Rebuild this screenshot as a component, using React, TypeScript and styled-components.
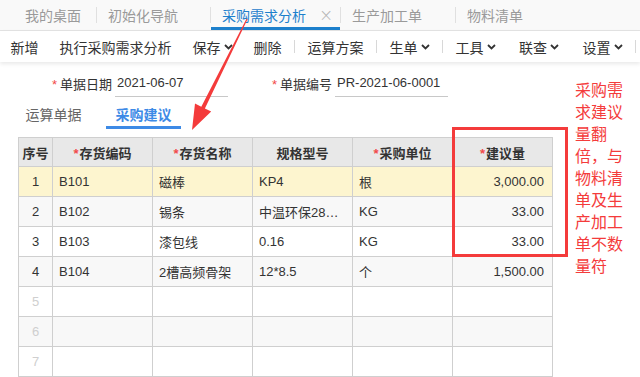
import styled, { createGlobalStyle } from "styled-components";

const GlobalStyle = createGlobalStyle`
  html, body {
    margin: 0;
    padding: 0;
    background: #fff;
  }
  body {
    font-family: "Liberation Sans", "Noto Sans CJK SC", sans-serif;
    color: #333;
  }
`;

const Page = styled.div`
  position: relative;
  width: 640px;
  height: 377px;
  overflow: hidden;
  background: #fff;
`;

const TabBar = styled.div`
  display: flex;
  align-items: stretch;
  height: 30px;
  background: #f9f9f9;
  border-bottom: 1px solid #e3e3e3;
  font-size: 14px;
`;

const Tab = styled.div<{ $width: number; $active?: boolean; $first?: boolean }>`
  display: flex;
  align-items: center;
  box-sizing: border-box;
  width: ${(p) => p.$width}px;
  padding-left: ${(p) => (p.$first ? 25 : 11)}px;
  color: ${(p) => (p.$active ? "#1d80cc" : "#9a9a9a")};
  border-bottom: 3px solid ${(p) => (p.$active ? "#1d80cc" : "transparent")};
  padding-top: 3px;
  white-space: nowrap;
`;

const TabClose = styled.span`
  margin-left: 13px;
  color: #b5b5b5;
  font-size: 17px;
  font-family: "DejaVu Sans", sans-serif;
  font-weight: 300;
`;

const TabDivider = styled.div`
  width: 1px;
  height: 16px;
  align-self: center;
  background: #e0e0e0;
`;

const Toolbar = styled.div`
  display: flex;
  align-items: center;
  height: 31px;
  font-size: 14px;
  color: #333;
  background: #fff;
  box-shadow: 0 2px 4px rgba(0, 0, 0, 0.09);
  position: relative;
`;

const ToolItem = styled.div<{ $wide?: boolean }>`
  display: flex;
  align-items: center;
  padding: 0 10.5px 0 ${(p) => (p.$wide ? 13 : 10.5)}px;
  white-space: nowrap;
`;

const ToolDivider = styled.div`
  width: 1px;
  height: 13px;
  margin: 0 2px;
  background: #d8d8d8;
`;

const Chevron = () => (
  <svg width="9" height="6" viewBox="0 0 9 6" style={{ marginLeft: 3 }}>
    <path d="M1 1 L4.5 4.5 L8 1" fill="none" stroke="#333" strokeWidth="1.8" />
  </svg>
);

const Content = styled.div`
  padding-top: 8px;
`;

const FormRow = styled.div`
  display: flex;
  gap: 12px;
  padding-left: 20px;
  height: 27px;
  font-size: 13px;
`;

const Field = styled.div`
  display: flex;
  align-items: center;
`;

const Label = styled.div`
  width: 92px;
  text-align: right;
  margin-right: 3px;
  color: #333;
`;

const Star = styled.span`
  color: #f24a4a;
  margin-right: 3px;
`;

const InputBox = styled.div`
  width: 113px;
  box-sizing: border-box;
  height: 27px;
  line-height: 26px;
  padding-left: 2px;
  border-bottom: 1px solid #c8c8c8;
  color: #333;
`;

const SubTabs = styled.div`
  display: flex;
  gap: 15px;
  padding-left: 16px;
  margin-top: 5px;
  font-size: 14px;
`;

const SubTab = styled.div<{ $active?: boolean }>`
  width: 75px;
  height: 27px;
  box-sizing: border-box;
  display: flex;
  align-items: center;
  justify-content: center;
  color: ${(p) => (p.$active ? "#3d8ae6" : "#666")};
  font-weight: ${(p) => (p.$active ? 600 : 400)};
  border-bottom: 3px solid ${(p) => (p.$active ? "#3d8ae6" : "transparent")};
`;

const TableWrap = styled.div`
  margin: 8px 0 0 18px;
`;

const Grid = styled.table`
  width: 535px;
  border-collapse: collapse;
  table-layout: fixed;
  font-size: 13px;
  color: #333;
`;

const Th = styled.th`
  height: 28px;
  border: 1px solid #cfcfcf;
  background: #e8e8e8;
  font-weight: 700;
  text-align: center;
  padding: 0;
  white-space: nowrap;
`;

const Row = styled.tr<{ $bg: string }>`
  background: ${(p) => p.$bg};
`;

const paddingFor = (align?: string) => {
  if (align === "center") return "0";
  if (align === "right") return "0 8px 0 6px";
  return "0 12px 0 6px";
};

const Td = styled.td<{ $align?: "left" | "center" | "right"; $muted?: boolean }>`
  height: 29px;
  border: 1px solid #cfcfcf;
  padding: ${(p) => paddingFor(p.$align)};
  text-align: ${(p) => p.$align || "left"};
  color: ${(p) => (p.$muted ? "#cfcfcf" : "#333")};
  white-space: nowrap;
  overflow: hidden;
  text-overflow: ellipsis;
`;

const HighlightBox = styled.div`
  position: absolute;
  left: 452px;
  top: 127px;
  width: 116px;
  height: 130px;
  box-sizing: border-box;
  border: 3px solid #f43b3b;
  pointer-events: none;
`;

const Note = styled.div`
  position: absolute;
  left: 575px;
  top: 78px;
  width: 49px;
  font-family: "Noto Sans CJK SC", sans-serif;
  font-size: 16px;
  line-height: 22px;
  color: #f43b3b;
`;

const ArrowLayer = styled.svg`
  position: absolute;
  left: 0;
  top: 0;
  pointer-events: none;
`;

const columns = [
  { title: "序号", width: 34, required: false },
  { title: "存货编码", width: 100, required: true },
  { title: "存货名称", width: 100, required: true },
  { title: "规格型号", width: 100, required: false },
  { title: "采购单位", width: 100, required: true },
  { title: "建议量", width: 100, required: true },
];

const rows = [
  { code: "B101", name: "磁棒", spec: "KP4", unit: "根", qty: "3,000.00" },
  { code: "B102", name: "锡条", spec: "中温环保2830无铅锡条", unit: "KG", qty: "33.00" },
  { code: "B103", name: "漆包线", spec: "0.16", unit: "KG", qty: "33.00" },
  { code: "B104", name: "2槽高频骨架", spec: "12*8.5", unit: "个", qty: "1,500.00" },
  null,
  null,
  null,
  null,
];

const rowBg = (i: number) => {
  if (i === 0) return "#fdf5cf";
  return i % 2 === 1 ? "#f8f8f8" : "#fff";
};

export default function App() {
  return (
    <Page>
      <GlobalStyle />
      <TabBar>
        <Tab $width={96} $first>我的桌面</Tab>
        <TabDivider />
        <Tab $width={113}>初始化导航</Tab>
        <TabDivider />
        <Tab $width={129} $active>
          采购需求分析<TabClose>×</TabClose>
        </Tab>
        <TabDivider />
        <Tab $width={114}>生产加工单</Tab>
        <TabDivider />
        <Tab $width={100}>物料清单</Tab>
      </TabBar>

      <Toolbar>
        <ToolItem>新增</ToolItem>
        <ToolItem>执行采购需求分析</ToolItem>
        <ToolItem>
          保存<Chevron />
        </ToolItem>
        <ToolItem>删除</ToolItem>
        <ToolDivider />
        <ToolItem>运算方案</ToolItem>
        <ToolDivider />
        <ToolItem>
          生单<Chevron />
        </ToolItem>
        <ToolDivider />
        <ToolItem>
          工具<Chevron />
        </ToolItem>
        <ToolItem $wide>
          联查<Chevron />
        </ToolItem>
        <ToolItem $wide>
          设置<Chevron />
        </ToolItem>
        <ToolDivider />
      </Toolbar>

      <Content>
        <FormRow>
          <Field>
            <Label>
              <Star>*</Star>单据日期
            </Label>
            <InputBox>2021-06-07</InputBox>
          </Field>
          <Field>
            <Label>
              <Star>*</Star>单据编号
            </Label>
            <InputBox>PR-2021-06-0001</InputBox>
          </Field>
        </FormRow>

        <SubTabs>
          <SubTab>运算单据</SubTab>
          <SubTab $active>采购建议</SubTab>
        </SubTabs>

        <TableWrap>
          <Grid>
            <colgroup>
              {columns.map((c) => (
                <col key={c.title} style={{ width: c.width }} />
              ))}
            </colgroup>
            <thead>
              <tr>
                {columns.map((c) => (
                  <Th key={c.title}>
                    {c.required && <Star style={{ marginRight: 1 }}>*</Star>}
                    {c.title}
                  </Th>
                ))}
              </tr>
            </thead>
            <tbody>
              {rows.map((r, i) => (
                <Row key={i} $bg={rowBg(i)}>
                  <Td $align="center" $muted={!r}>
                    {i + 1}
                  </Td>
                  <Td>{r?.code}</Td>
                  <Td>{r?.name}</Td>
                  <Td>{r?.spec}</Td>
                  <Td>{r?.unit}</Td>
                  <Td $align="right">{r?.qty}</Td>
                </Row>
              ))}
            </tbody>
          </Grid>
        </TableWrap>
      </Content>

      <HighlightBox />
      <Note>采购需求建议量翻倍，与物料清单及生产加工单不数量符</Note>

      <ArrowLayer width="640" height="377" viewBox="0 0 640 377">
        <polygon
          points="247.5,19.2 204.9,108.5 211.2,111.6 192,130 195,103.6 201.3,106.7 246.5,18.8"
          fill="#f43b3b"
        />
      </ArrowLayer>
    </Page>
  );
}
